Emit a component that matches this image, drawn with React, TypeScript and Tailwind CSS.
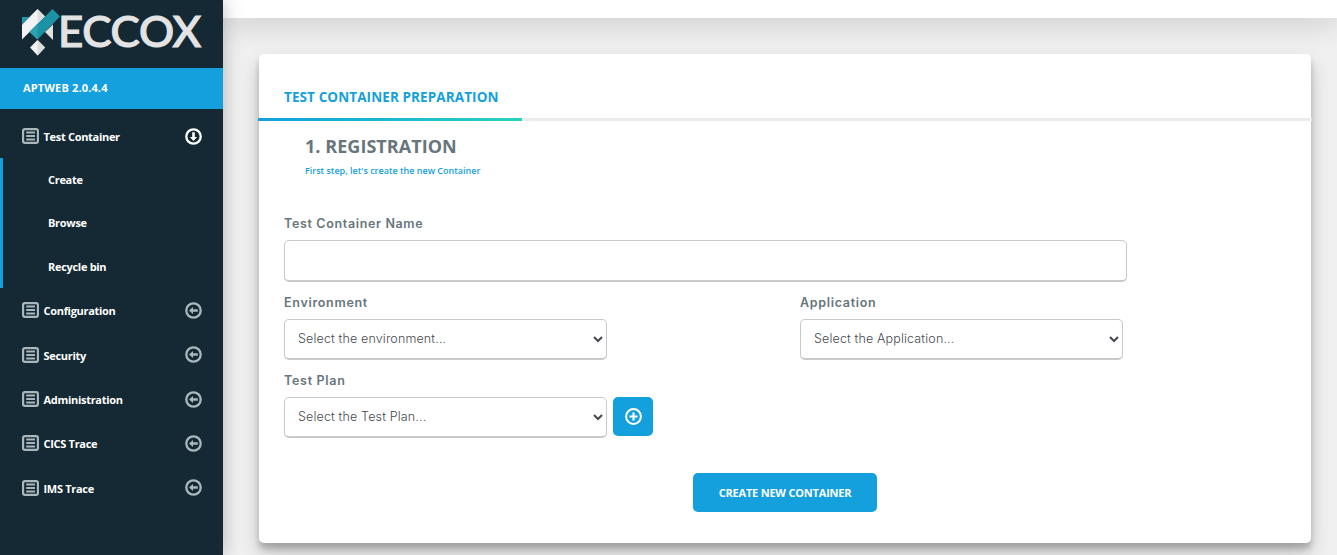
import type { ReactNode } from "react";

function ListIcon() {
  return (
    <svg width="17" height="16" viewBox="0 0 17 16" fill="none" stroke="#aab7bc">
      <rect x="1.1" y="1.1" width="14.8" height="13.8" rx="1.8" strokeWidth="2.2" />
      <path d="M4.2 4.5H13M4.2 8H13M4.2 11.500H13" strokeWidth="1.8" />
    </svg>
  );
}

function ArrowIcon({ open = false }: { open?: boolean }) {
  return (
    <svg width="17" height="17" viewBox="0 0 17 17" className={open ? "-rotate-90" : ""}>
      <circle cx="8.5" cy="8.5" r="7.2" fill="none" stroke={open ? "#ffffff" : "#aab7bc"} strokeWidth="2.3" />
      <path d="M4 8.5L8 4.9V7.2H12.8V9.8H8V12.1Z" fill={open ? "#ffffff" : "#aab7bc"} />
    </svg>
  );
}

function Logo() {
  return (
    <svg width="223" height="68" viewBox="0 0 223 68" className="block">
      <path d="M37.500 9L45 16.500L22 39.500V24.500Z" fill="#f3f3f3" />
      <path d="M37.500 9L45 16.500L37.500 24Z" fill="#dedede" />
      <path d="M22 17H29.500L22 24.500Z" fill="#2198a8" />
      <path d="M29.500 32L52.500 9L60 16.500L37.500 39.500Z" fill="#1c93a5" />
      <path d="M29.500 32L37.500 24V39.500Z" fill="#2aa0b0" />
      <path d="M45 32L53 24.500V40Z" fill="#e0e0e0" />
      <path d="M37.500 40L45 47.500L37.500 55.500L30 47.500Z" fill="#f3f3f3" />
      <path d="M37.500 40L45 47.500L37.500 55.500Z" fill="#dcdcdc" />
      <text x="58" y="47" textLength="143" lengthAdjust="spacingAndGlyphs" fontFamily="Lato, sans-serif" fontSize="43" fontWeight="500" fill="#e3e3e4" stroke="#e3e3e4" strokeWidth="1.1">
        ECCOX
      </text>
    </svg>
  );
}

function MenuRow({ children, open }: { children: ReactNode; open?: boolean }) {
  return (
    <div className="flex h-[44.33px] items-center pl-[21.5px] pr-[21px]">
      <ListIcon />
      <span className="ml-[5px] flex-1 whitespace-nowrap pt-[1.5px]">{children}</span>
      <ArrowIcon open={open} />
    </div>
  );
}

function Field({ label, option }: { label: string; option: string }) {
  return (
    <label className="block w-[323px]">
      <span className="block h-[22px] font-['Inter'] text-[12.5px] leading-[12px] font-semibold tracking-[0.7px] text-[#67757c]">{label}</span>
      <select className="block h-[41px] w-[323px] rounded-[5px] border border-b-2 border-[#c9c9ca] bg-white pl-[9px] pr-[2px] pb-[2px] font-['Inter'] text-[12.5px] font-light tracking-[0.15px] text-[#454a50]">
        <option>{option}</option>
      </select>
    </label>
  );
}

export default function App() {
  return (
    <div className="flex h-[555px] w-[1337px] overflow-hidden bg-[#f0f0f0] font-['Open_Sans']">
      <aside className="relative z-10 w-[223px] shrink-0 bg-[#142933] text-[11px] leading-[16px] font-bold tracking-[-0.3px] text-white shadow-[0_0_18px_rgba(0,0,0,0.26)]">
        <Logo />
        <div className="flex h-[41px] items-center bg-[#149fdd] pb-[2px] pl-[23px] tracking-[0.15px]">APTWEB 2.0.4.4</div>
        <nav className="pt-[5px]">
          <MenuRow open>Test Container</MenuRow>
          <div className="border-l-[3px] border-[#149fdd] pl-[45px]">
            <div className="flex h-[43.33px] items-center">Create</div>
            <div className="flex h-[43.33px] items-center">Browse</div>
            <div className="flex h-[43.33px] items-center">Recycle bin</div>
          </div>
          <MenuRow>Configuration</MenuRow>
          <MenuRow>Security</MenuRow>
          <MenuRow>Administration</MenuRow>
          <MenuRow>CICS Trace</MenuRow>
          <MenuRow>IMS Trace</MenuRow>
        </nav>
      </aside>
      <div className="flex-1">
        <header className="h-[18px] bg-white shadow-[0_4px_30px_rgba(0,0,0,0.2)]" />
        <main className="ml-[36px] mt-[36px] h-[489px] w-[1052px] rounded-[5px] bg-white pt-[34px] shadow-[0_10px_20px_rgba(0,0,0,0.19),0_6px_6px_rgba(0,0,0,0.2)]">
          <h1 className="h-[30px] pl-[25px] text-[13.5px] leading-[18px] font-bold tracking-[0.1px] text-[#149fdd]">TEST CONTAINER PREPARATION</h1>
          <div className="-mx-px h-[3px] bg-[#ebebeb]">
            <div className="h-[3px] w-[264px] bg-linear-to-r from-[#149fdd] to-[#2bd2bd]" />
          </div>
          <div className="pl-[46px] pt-[13px]">
            <h2 className="text-[18px] leading-[24px] font-bold tracking-[0.05px] text-[#67757c]">1. REGISTRATION</h2>
            <p className="mt-[7px] text-[9px] leading-[12px] font-semibold text-[#149fdd]">First step, let's create the new Container</p>
          </div>
          <div className="pl-[25px] pt-[41px]">
            <label className="block">
              <span className="block h-[22px] font-['Inter'] text-[12.5px] leading-[12px] font-semibold tracking-[0.65px] text-[#67757c]">Test Container Name</span>
              <input className="block h-[42px] w-[843px] rounded-[5px] border border-b-2 border-[#c9c9ca] bg-white px-3 text-sm" />
            </label>
            <div className="flex gap-[193px] pt-[15px]">
              <Field label="Environment" option="Select the environment..." />
              <Field label="Application" option="Select the Application..." />
            </div>
            <div className="flex items-end gap-[6px] pt-[15px]">
              <Field label="Test Plan" option="Select the Test Plan..." />
              <button className="mb-[2px] flex h-[39px] w-[40px] items-center justify-center rounded-[5px] bg-[#149fdd]">
                <svg width="17" height="17" viewBox="0 0 17 17" fill="none" stroke="#fff">
                  <circle cx="8.5" cy="8.5" r="7.4" strokeWidth="2" />
                  <path d="M8.500 4.500V12.500M4.500 8.500H12.500" strokeWidth="2.200" />
                </svg>
              </button>
            </div>
          </div>
          <button className="ml-[434px] mt-[35px] flex h-[39px] w-[184px] items-center justify-center whitespace-nowrap rounded-[5px] bg-[#149fdd] pt-px text-[11px] font-bold tracking-[-0.2px] text-white">CREATE NEW CONTAINER</button>
        </main>
      </div>
    </div>
  );
}
